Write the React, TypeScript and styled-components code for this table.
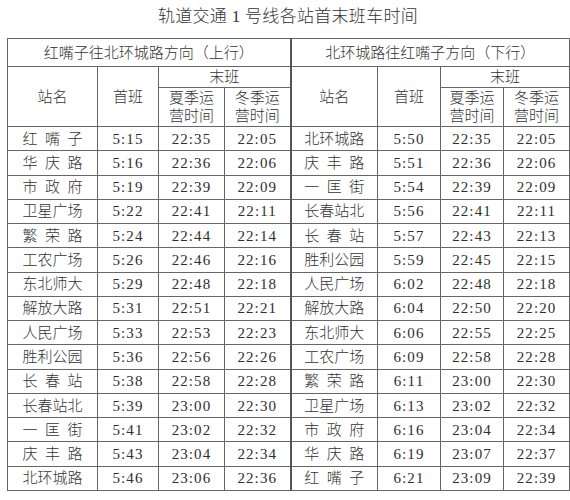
import styled, { createGlobalStyle } from "styled-components";

const GlobalStyle = createGlobalStyle`
  html, body {
    margin: 0;
    padding: 0;
    background: #fff;
  }
  body {
    font-family: "Liberation Serif", "Noto Sans CJK SC", serif;
    color: #333;
  }
`;

const StyledPage = styled.div`
  width: 570px;
  height: 500px;
  padding: 6px 1px 0 7px;
  box-sizing: border-box;
`;

const StyledTitle = styled.div`
  text-align: center;
  font-size: 17px;
  font-weight: 300;
  line-height: 22px;
  height: 32px;
  letter-spacing: 0.3px;
  color: #333;
`;

const StyledTable = styled.table`
  border-collapse: collapse;
  table-layout: fixed;
  width: 562px;
  font-size: 15px;
  font-weight: 300;
  border: 1px solid #555;
`;

const StyledCell = styled.td<{ $split?: boolean; $h?: number }>`
  border: 1px solid #666;
  border-left: ${(p) => (p.$split ? "2px solid #555" : "1px solid #666")};
  padding: 0;
  text-align: center;
  vertical-align: middle;
  height: ${(p) => (p.$h ? `${p.$h}px` : "auto")};
  line-height: 18px;
  white-space: nowrap;
  overflow: hidden;
`;

const StyledTime = styled.span`
  font-size: 15px;
  font-weight: 400;
  letter-spacing: 1.1px;
  color: #2e2e2e;
`;

const StyledStation = styled.span<{ $spaced: boolean }>`
  letter-spacing: ${(p) => (p.$spaced ? "0.5em" : "0")};
  margin-right: ${(p) => (p.$spaced ? "-0.5em" : "0")};
`;

const StyledRow = styled.tr`
  height: 24.27px;
`;

type Row = [string, string, string, string];

const up: Row[] = [
  ["红嘴子", "5:15", "22:35", "22:05"],
  ["华庆路", "5:16", "22:36", "22:06"],
  ["市政府", "5:19", "22:39", "22:09"],
  ["卫星广场", "5:22", "22:41", "22:11"],
  ["繁荣路", "5:24", "22:44", "22:14"],
  ["工农广场", "5:26", "22:46", "22:16"],
  ["东北师大", "5:29", "22:48", "22:18"],
  ["解放大路", "5:31", "22:51", "22:21"],
  ["人民广场", "5:33", "22:53", "22:23"],
  ["胜利公园", "5:36", "22:56", "22:26"],
  ["长春站", "5:38", "22:58", "22:28"],
  ["长春站北", "5:39", "23:00", "22:30"],
  ["一匡街", "5:41", "23:02", "22:32"],
  ["庆丰路", "5:43", "23:04", "22:34"],
  ["北环城路", "5:46", "23:06", "22:36"],
];

const down: Row[] = [
  ["北环城路", "5:50", "22:35", "22:05"],
  ["庆丰路", "5:51", "22:36", "22:06"],
  ["一匡街", "5:54", "22:39", "22:09"],
  ["长春站北", "5:56", "22:41", "22:11"],
  ["长春站", "5:57", "22:43", "22:13"],
  ["胜利公园", "5:59", "22:45", "22:15"],
  ["人民广场", "6:02", "22:48", "22:18"],
  ["解放大路", "6:04", "22:50", "22:20"],
  ["东北师大", "6:06", "22:55", "22:25"],
  ["工农广场", "6:09", "22:58", "22:28"],
  ["繁荣路", "6:11", "23:00", "22:30"],
  ["卫星广场", "6:13", "23:02", "22:32"],
  ["市政府", "6:16", "23:04", "22:34"],
  ["华庆路", "6:19", "23:07", "22:37"],
  ["红嘴子", "6:21", "23:09", "22:39"],
];

const Station = ({ name }: { name: string }) => (
  <StyledStation $spaced={name.length === 3}>{name}</StyledStation>
);

const Half = ({ row, split }: { row: Row; split?: boolean }) => (
  <>
    <StyledCell $split={split}>
      <Station name={row[0]} />
    </StyledCell>
    <StyledCell>
      <StyledTime>{row[1]}</StyledTime>
    </StyledCell>
    <StyledCell>
      <StyledTime>{row[2]}</StyledTime>
    </StyledCell>
    <StyledCell>
      <StyledTime>{row[3]}</StyledTime>
    </StyledCell>
  </>
);

const HeadCells = ({ split }: { split?: boolean }) => (
  <>
    <StyledCell rowSpan={2} $split={split}>
      站名
    </StyledCell>
    <StyledCell rowSpan={2}>首班</StyledCell>
    <StyledCell colSpan={2} $h={20}>
      末班
    </StyledCell>
  </>
);

const SeasonCells = () => (
  <>
    <StyledCell $h={38}>
      夏季运
      <br />
      营时间
    </StyledCell>
    <StyledCell $h={38}>
      冬季运
      <br />
      营时间
    </StyledCell>
  </>
);

const App = () => {
  return (
    <StyledPage>
      <GlobalStyle />
      <StyledTitle>轨道交通 1 号线各站首末班车时间</StyledTitle>
      <StyledTable>
        <colgroup>
          <col style={{ width: 90 }} />
          <col style={{ width: 61 }} />
          <col style={{ width: 66 }} />
          <col style={{ width: 66 }} />
          <col style={{ width: 87 }} />
          <col style={{ width: 63 }} />
          <col style={{ width: 63 }} />
          <col style={{ width: 66 }} />
        </colgroup>
        <tbody>
          <tr>
            <StyledCell colSpan={4} $h={27}>
              红嘴子往北环城路方向（上行）
            </StyledCell>
            <StyledCell colSpan={4} $h={27} $split>
              北环城路往红嘴子方向（下行）
            </StyledCell>
          </tr>
          <tr>
            <HeadCells />
            <HeadCells split />
          </tr>
          <tr>
            <SeasonCells />
            <SeasonCells />
          </tr>
          {up.map((row, i) => (
            <StyledRow key={row[0] + i}>
              <Half row={row} />
              <Half row={down[i]} split />
            </StyledRow>
          ))}
        </tbody>
      </StyledTable>
    </StyledPage>
  );
};

export default App;
